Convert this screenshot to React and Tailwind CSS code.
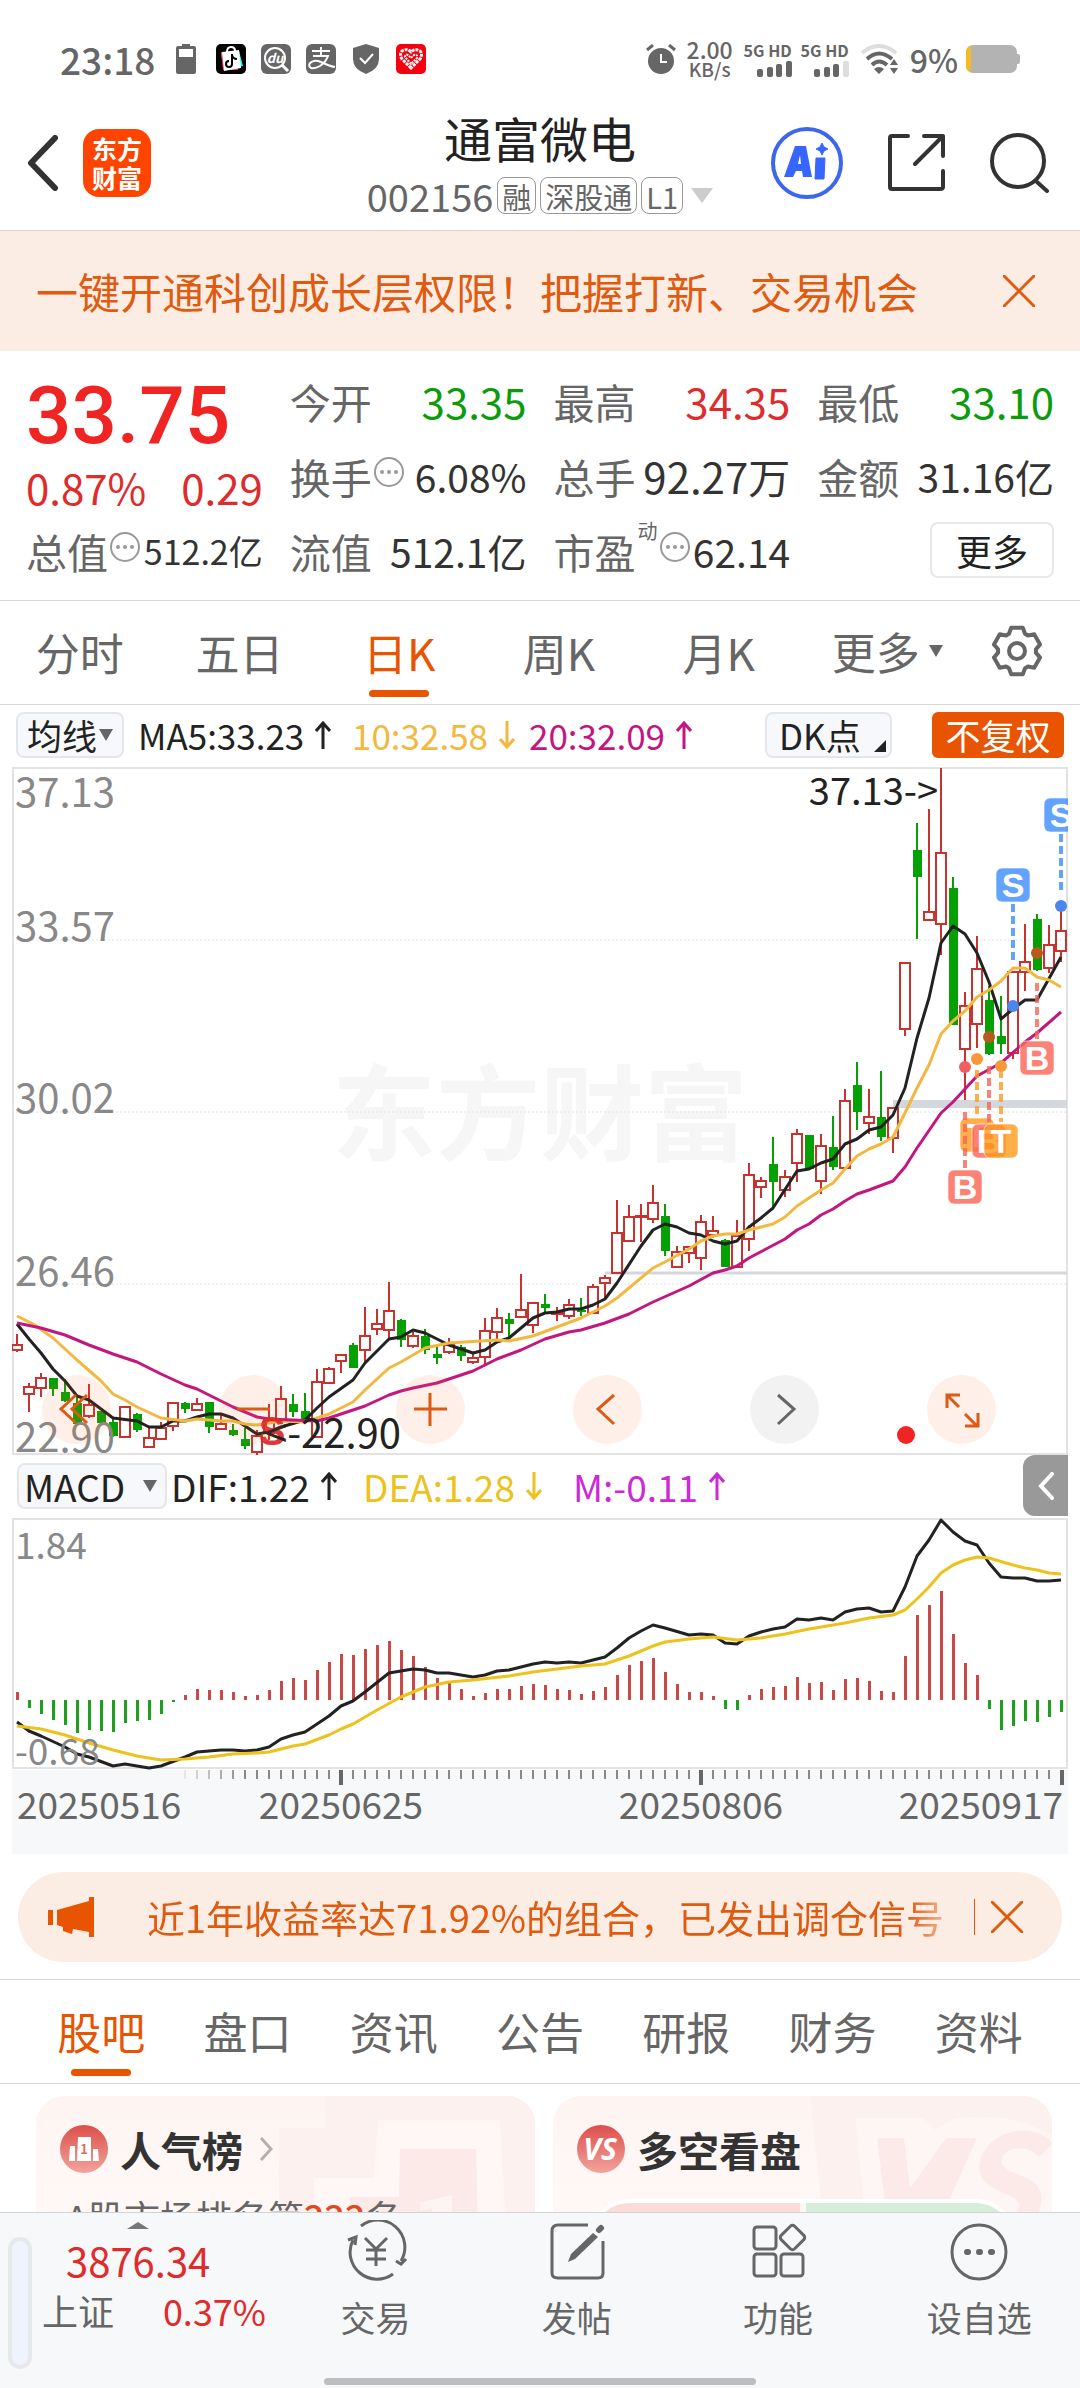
import { useState } from 'react'
import clsx from 'clsx'

// [up, high, bodyTop, bodyBottom, low] in chart units, one per trading day
const CANDLES = [
  [1, 1334, 1345, 1350, 1352], [1, 1383, 1387, 1394, 1412], [1, 1373, 1378, 1388, 1397], [0, 1378, 1378, 1389, 1396],
  [0, 1379, 1392, 1401, 1402], [0, 1397, 1403, 1424, 1424], [1, 1384, 1405, 1416, 1418], [0, 1411, 1411, 1423, 1424],
  [0, 1418, 1422, 1436, 1437], [1, 1407, 1407, 1437, 1437], [0, 1413, 1414, 1430, 1432], [1, 1428, 1438, 1447, 1448],
  [1, 1422, 1428, 1439, 1440], [1, 1403, 1403, 1426, 1431], [0, 1402, 1403, 1409, 1413], [1, 1398, 1404, 1410, 1411],
  [0, 1402, 1402, 1427, 1433], [1, 1415, 1424, 1429, 1430], [0, 1424, 1430, 1435, 1436], [0, 1428, 1439, 1446, 1449],
  [1, 1430, 1436, 1452, 1456], [1, 1404, 1420, 1433, 1440], [1, 1386, 1399, 1420, 1421], [0, 1394, 1404, 1412, 1417],
  [0, 1393, 1411, 1420, 1422], [1, 1369, 1382, 1437, 1438], [1, 1367, 1369, 1383, 1384], [1, 1355, 1355, 1361, 1373],
  [0, 1343, 1345, 1368, 1368], [1, 1307, 1336, 1350, 1363], [1, 1309, 1324, 1329, 1335], [1, 1282, 1311, 1330, 1338],
  [0, 1319, 1320, 1340, 1347], [1, 1332, 1336, 1346, 1348], [0, 1329, 1336, 1350, 1354], [0, 1346, 1354, 1358, 1364],
  [1, 1338, 1345, 1352, 1354], [0, 1345, 1347, 1356, 1361], [1, 1353, 1358, 1362, 1364], [1, 1318, 1331, 1357, 1366],
  [1, 1308, 1318, 1332, 1340], [0, 1313, 1319, 1324, 1337], [1, 1274, 1310, 1317, 1318], [1, 1303, 1303, 1325, 1333],
  [0, 1294, 1304, 1308, 1313], [1, 1307, 1313, 1314, 1321], [1, 1299, 1305, 1316, 1319], [0, 1298, 1310, 1312, 1316],
  [1, 1284, 1287, 1313, 1314], [1, 1275, 1278, 1283, 1298], [1, 1200, 1233, 1273, 1274], [1, 1205, 1217, 1241, 1242],
  [1, 1204, 1216, 1217, 1242], [1, 1185, 1203, 1219, 1223], [0, 1204, 1216, 1251, 1256], [1, 1246, 1252, 1267, 1267],
  [1, 1247, 1247, 1253, 1263], [1, 1215, 1222, 1258, 1270], [1, 1216, 1231, 1235, 1238], [0, 1239, 1240, 1267, 1267],
  [1, 1220, 1236, 1267, 1267], [1, 1163, 1175, 1239, 1251], [1, 1177, 1181, 1187, 1198], [0, 1137, 1164, 1182, 1207],
  [1, 1170, 1177, 1190, 1197], [1, 1129, 1134, 1163, 1182], [0, 1135, 1135, 1169, 1170], [1, 1134, 1146, 1181, 1194],
  [0, 1116, 1147, 1167, 1170], [1, 1089, 1101, 1168, 1168], [0, 1062, 1085, 1112, 1130], [1, 1089, 1117, 1123, 1134],
  [0, 1071, 1117, 1137, 1141], [1, 1108, 1108, 1138, 1153], [1, 963, 963, 1029, 1036], [0, 823, 850, 877, 939],
  [1, 809, 912, 920, 921], [1, 768, 853, 924, 955], [0, 877, 888, 1025, 1025], [1, 992, 1006, 1049, 1100],
  [1, 936, 969, 1024, 1048], [0, 986, 1000, 1054, 1055], [0, 996, 1036, 1044, 1054], [1, 972, 972, 1053, 1059],
  [1, 924, 962, 972, 991], [0, 914, 919, 970, 971], [1, 925, 945, 968, 973], [1, 903, 931, 951, 962],
]

const MA5 = '17,1324 29,1339 41,1353 53,1369 65,1381 77,1396 89,1400 113,1418 137,1421 149,1427 161,1427 173,1421 185,1421 197,1417 209,1414 221,1414 233,1418 257,1434 269,1432 281,1427 305,1420 317,1408 329,1397 353,1380 365,1363 389,1339 401,1337 413,1330 425,1333 449,1345 473,1353 485,1350 497,1342 509,1338 533,1318 545,1313 557,1312 569,1309 581,1309 593,1305 605,1299 617,1283 641,1246 653,1230 665,1224 677,1227 689,1233 701,1235 713,1241 725,1244 737,1241 749,1227 761,1218 773,1208 797,1171 809,1169 821,1163 833,1159 845,1144 857,1139 869,1130 881,1127 893,1115 905,1088 917,1038 929,998 941,943 953,926 965,934 977,953 989,982 1001,1019 1013,1009 1025,1000 1037,1000 1061,957'
const MA10 = '17,1316 35,1325 53,1338 77,1360 101,1381 113,1394 125,1400 137,1407 161,1418 185,1421 197,1419 221,1421 233,1421 245,1424 257,1425 269,1423 281,1421 305,1422 317,1418 329,1414 353,1402 365,1390 389,1368 401,1362 425,1348 449,1343 497,1340 509,1341 533,1336 557,1327 581,1318 605,1306 617,1298 653,1268 665,1262 689,1249 701,1241 713,1236 725,1234 737,1234 749,1230 761,1227 773,1224 785,1217 797,1206 821,1190 833,1183 845,1169 857,1156 869,1149 881,1144 893,1137 905,1113 917,1088 929,1065 941,1034 953,1021 965,1011 977,997 989,990 1001,981 1013,968 1025,968 1037,977 1049,980 1061,987'
const MA20 = '17,1323 41,1328 65,1335 89,1345 113,1354 137,1362 161,1374 185,1385 197,1389 221,1401 233,1407 257,1417 269,1419 317,1421 329,1418 365,1406 389,1395 401,1391 413,1388 437,1383 473,1371 497,1359 521,1350 545,1339 569,1332 581,1330 605,1323 629,1314 653,1302 689,1286 713,1273 725,1270 737,1266 749,1258 785,1239 797,1230 809,1224 821,1215 833,1209 845,1201 857,1194 869,1190 893,1181 905,1167 917,1148 941,1113 953,1102 977,1076 1001,1063 1025,1042 1037,1033 1061,1012'

const MACD = [
  8, -8, -14, -20, -25, -33, -30, -31, -32, -23, -21, -20, -14, -2, 5, 11, 10, 10, 8, 4, 5, 10, 19, 22, 20, 30, 38, 46, 45, 51,
  55, 59, 50, 44, 33, 22, 17, 11, 4, 7, 11, 11, 14, 16, 15, 11, 10, 6, 9, 13, 25, 35, 39, 42, 28, 16, 8, 8, 4, -9,
  -10, 5, 11, 13, 14, 23, 17, 18, 10, 21, 22, 19, 9, 8, 44, 85, 95, 109, 66, 37, 25, -9, -30, -26, -21, -22, -17, -12,
]
// [day, y]
const DIF = [
  [0, 222], [1, 231], [2, 236], [4, 247], [5, 254], [6, 257], [8, 266], [9, 264], [11, 268], [12, 266], [14, 257], [15, 252],
  [17, 250], [18, 250], [19, 251], [20, 250], [21, 247], [22, 239], [23, 235], [24, 232], [26, 216], [27, 206], [28, 201],
  [29, 192], [31, 173], [33, 169], [34, 170], [35, 173], [36, 173], [38, 177], [39, 175], [40, 171], [41, 170], [43, 164],
  [44, 162], [45, 163], [46, 162], [47, 163], [49, 157], [50, 148], [51, 138], [52, 131], [53, 125], [54, 128], [56, 135],
  [57, 134], [58, 135], [59, 143], [60, 144], [61, 136], [62, 132], [63, 129], [64, 127], [65, 119], [66, 120], [67, 118],
  [68, 120], [69, 112], [70, 109], [71, 108], [72, 112], [73, 111], [74, 87], [75, 56], [76, 40], [77, 20], [78, 32],
  [79, 41], [80, 45], [81, 63], [82, 77], [83, 78], [84, 78], [85, 81], [86, 81], [87, 80],
]
const DEA = [
  [0, 226], [2, 229], [4, 235], [6, 243], [8, 250], [10, 256], [12, 260], [14, 259], [16, 257], [18, 254], [20, 253], [21, 252],
  [23, 246], [24, 244], [26, 235], [27, 229], [28, 224], [30, 210], [32, 197], [34, 187], [36, 182], [38, 180], [41, 176],
  [43, 172], [45, 169], [47, 166], [49, 164], [51, 156], [53, 146], [54, 142], [56, 139], [58, 137], [60, 140], [62, 138],
  [64, 134], [66, 129], [69, 123], [71, 118], [73, 115], [74, 110], [75, 99], [76, 87], [77, 73], [78, 65], [79, 60], [80, 57],
  [81, 58], [83, 65], [84, 68], [85, 70], [86, 73], [87, 74],
]

const dayX = (i) => 17 + i * 12
const toPoints = (rows) => rows.map(([i, y]) => `${dayX(i)},${y}`).join(' ')

// Trade markers: badge centre, dashed stem, dot
const MARKERS = [
  { t: 'T', x: 977, y: 1135, from: 1070, to: 1116, dot: 1059, color: '#ff9a1f', dotColor: '#f7993a' },
  { t: 'B', x: 989, y: 1141, from: 1066, to: 1122, dot: 1037, color: '#fb6352', dotColor: '#b85a20' },
  { t: 'T', x: 1001, y: 1141, from: 1070, to: 1122, dot: 1066, color: '#ff9a1f', dotColor: '#f7993a' },
  { t: 'B', x: 965, y: 1187, from: 1112, to: 1168, dot: 1067, color: '#fb6352', dotColor: '#f06060' },
  { t: 'B', x: 1037, y: 1058, from: 983, to: 1039, dot: 953, color: '#fb6352', dotColor: '#b85a20' },
  { t: 'S', x: 1013, y: 885, from: 904, to: 960, dot: 1006, color: '#3b8cff', dotColor: '#4a86ec' },
  { t: 'S', x: 1061, y: 815, from: 834, to: 890, dot: 906, color: '#3b8cff', dotColor: '#4a86ec' },
]

function Triangle({ className }) {
  return (
    <svg viewBox="0 0 14 12" preserveAspectRatio="none" className={className} fill="currentColor" aria-hidden="true">
      <path d="M0 0h14L7 12z" />
    </svg>
  )
}

function Arrow({ down }) {
  return (
    <svg viewBox="0 0 16 28" className="w-4 h-7 ml-[11px]" fill="none" stroke="currentColor" strokeWidth="3" aria-hidden="true">
      <path d={down ? 'M8 0v26M1 18l7 8 7-8' : 'M8 28V2M1 10l7-8 7 8'} />
    </svg>
  )
}

function Close() {
  return (
    <svg viewBox="0 0 32 32" className="w-8 h-8" fill="none" stroke="#e05a10" strokeWidth="3" strokeLinecap="round">
      <path d="M1 1l30 30M31 1L1 31" />
    </svg>
  )
}

function More() {
  return (
    <svg viewBox="0 0 30 30" className="w-[30px] h-[30px] mb-2 ml-[2px]" aria-hidden="true">
      <circle cx="15" cy="15" r="14" fill="none" stroke="#999" strokeWidth="2" />
      <circle cx="8" cy="15" r="2" fill="#999" />
      <circle cx="15" cy="15" r="2" fill="#999" />
      <circle cx="22" cy="15" r="2" fill="#999" />
    </svg>
  )
}

function Signal({ weak }) {
  return (
    <div className="flex flex-col items-end gap-[3px] w-12">
      <span className="text-[16px] leading-[16px] font-bold whitespace-nowrap">5G HD</span>
      <svg viewBox="0 0 35 16" className="w-[35px] h-4" fill="#666">
        <rect x="0" y="8" width="6" height="8" rx="2" />
        <rect x="10" y="6" width="6" height="10" rx="2" />
        <rect x="19" y="3" width="6" height="13" rx="2" />
        <rect x="29" y="0" width="6" height="16" rx="2" fill={weak ? '#ddd' : '#666'} />
      </svg>
    </div>
  )
}

function StatusBar() {
  return (
    <div className="flex items-center h-[100px] pt-[18px] pl-[60px] pr-[60px] text-[#666]">
      <span className="w-[94px] text-[37px] leading-[40px] font-medium">23:18</span>
      <svg viewBox="0 0 20 30" className="w-5 h-[30px] ml-[22px]">
        <path d="M6 0h8v2h4q2 0 2 2v24q0 2-2 2H2q-2 0-2-2V4q0-2 2-2h4z" fill="#666" />
        <rect x="3" y="5" width="14" height="8" fill="#fff" />
      </svg>
      <svg viewBox="0 0 30 30" className="w-[30px] h-[30px] ml-5">
        <rect width="30" height="30" rx="5" fill="#000" />
        <path d="M11 8q0-5 4-5t4 4" fill="none" stroke="#fff" strokeWidth="2" />
        <path d="M5 9l18-2 4 15-19 4z" fill="#25f4ee" />
        <path d="M5 8h16l1 18H7z" fill="#fe2c55" />
        <path d="M6 8l17-2 2 18-17 3z" fill="#fff" />
        <path d="M16 10v10a3 3 0 1 1-3-3M16 11q1 4 5 4" fill="none" stroke="#000" strokeWidth="2" />
      </svg>
      <svg viewBox="0 0 30 30" className="w-[30px] h-[30px] ml-[15px]">
        <rect width="30" height="30" rx="6" fill="#666" />
        <circle cx="14" cy="14" r="10" fill="none" stroke="#fff" strokeWidth="2" />
        <path d="M21 21l6 6" stroke="#fff" strokeWidth="3" />
        <text x="14" y="19" fontSize="13" fontWeight="700" fontStyle="italic" textAnchor="middle" fill="#fff">du</text>
      </svg>
      <svg viewBox="0 0 30 30" className="w-[30px] h-[30px] ml-[15px]">
        <rect width="30" height="30" rx="6" fill="#666" />
        <path d="M6 7h18M15 3v9M7 12h15q-2 6-8 10-5 3-9 2-3-2-1-5 4-4 11-1 8 4 14 5" fill="none" stroke="#fff" strokeWidth="2" />
      </svg>
      <svg viewBox="0 0 26 30" className="w-[26px] h-[30px] ml-[17px]">
        <path d="M13 0l13 4v11q0 10-13 15Q0 25 0 15V4z" fill="#666" />
        <path d="M7 14l5 5 8-9" fill="none" stroke="#fff" strokeWidth="2" />
      </svg>
      <svg viewBox="0 0 30 30" className="w-[30px] h-[30px] ml-[17px]">
        <rect width="30" height="30" rx="5" fill="#f5000f" />
        <path d="M15 24L6 15q-3-5 0-8 5-3 9 1 4-4 9-1 3 3 0 8z" fill="none" stroke="#fff" strokeWidth="3" strokeDasharray="3 1" />
        <path d="M15 20l-6-7q0-3 3-2l3 3 3-3q4-1 3 3z" fill="none" stroke="#fff" strokeWidth="2" strokeDasharray="2 1" />
      </svg>

      <div className="flex items-center ml-auto">
        <svg viewBox="0 0 30 30" className="w-[30px] h-[30px]">
          <circle cx="15" cy="17" r="13" fill="#666" />
          <path d="M1 6l6-5M29 6l-6-5" stroke="#666" strokeWidth="3" />
          <path d="M15 10v8h6" fill="none" stroke="#fff" strokeWidth="2" />
        </svg>
        <div className="flex flex-col items-center ml-[11px] font-medium">
          <span className="text-[23px] leading-[20px]">2.00</span>
          <span className="text-[19px] leading-[20px]">KB/s</span>
        </div>
        <div className="flex gap-[9px] ml-[11px]">
          <Signal />
          <Signal weak />
        </div>
        <svg viewBox="0 0 37 30" className="w-[37px] h-[30px] ml-3" fill="none" strokeWidth="4">
          <path d="M1 9Q18-5 35 9" stroke="#ddd" />
          <path d="M6 15Q18 4 31 15M11 21Q18 14 26 21" stroke="#666" />
          <path d="M13 25q5-4 10 0l-5 5zM29 21l4-6 4 6zM29 24h8l-4 6z" fill="#666" />
        </svg>
        <span className="text-[32px] leading-[32px] font-medium ml-3">9%</span>
        <svg viewBox="0 0 54 28" className="w-[54px] h-7 ml-2">
          <rect width="51" height="28" rx="7" fill="#b3b3b3" />
          <path d="M5 1v26Q0 25 0 21V7Q0 3 5 1z" fill="#f7b91e" />
          <rect x="49" y="9" width="5" height="10" rx="2" fill="#b3b3b3" />
        </svg>
      </div>
    </div>
  )
}

function Header() {
  const badge = 'flex items-center h-[37px] px-1 border border-[#999] rounded-lg text-[29px] leading-[30px]'
  return (
    <header className="relative flex items-center justify-between h-[131px] pl-[27px] pr-[30px] pb-[5px] border-b border-[#d8d8d2]">
      <div className="flex items-center gap-6">
        <button aria-label="返回">
          <svg viewBox="0 0 32 56" className="w-8 h-14" fill="none" stroke="#333" strokeWidth="6" strokeLinecap="round" strokeLinejoin="round">
            <path d="M28 3L4 28l24 25" />
          </svg>
        </button>
        <a href="#home" className="grid content-center justify-center w-[68px] h-[68px] rounded-2xl bg-[#ff4400] text-white font-bold text-[25px] leading-[29px]">
          <span>东方</span>
          <span>财富</span>
        </a>
      </div>

      <div className="absolute inset-x-0 top-[7px] flex flex-col items-center pointer-events-none">
        <h1 className="text-[48px] leading-[60px] text-[#222]">通富微电</h1>
        <div className="flex items-center gap-1 h-[57px] text-[#666]">
          <span className="text-[38px] leading-[40px]">002156</span>
          <span className={badge}>融</span>
          <span className={badge}>深股通</span>
          <span className={badge}>L1</span>
          <Triangle className="w-[22px] h-[15px] ml-1 text-[#ccc]" />
        </div>
      </div>

      <div className="flex items-center gap-11">
        <button aria-label="AI 助手">
          <svg viewBox="0 0 72 74" className="w-[72px] h-[74px]">
            <circle cx="36" cy="37" r="34" fill="none" stroke="#3b66ee" strokeWidth="4" />
            <path fillRule="evenodd" d="M24 20h11l6 31h-9l-1-6h-6l-3 6h-9zM27 38h3l-1-9z" fill="#3766ff" />
            <path d="M45 32h9l-1 21h-9zM51 17l2 4 4 2-4 2-2 4-2-4-4-2 4-2z" fill="#3766ff" stroke="#3766ff" strokeLinejoin="round" />
          </svg>
        </button>
        <button aria-label="分享">
          <svg viewBox="0 0 59 59" className="w-[59px] h-[59px]" fill="none" stroke="#333" strokeWidth="4" strokeLinecap="round" strokeLinejoin="round">
            <path d="M21 3H5q-2 0-2 2v49q0 2 2 2h48q3 0 3-2V38M37 3h19v20M56 3L28 31" />
          </svg>
        </button>
        <button aria-label="搜索">
          <svg viewBox="0 0 60 60" className="w-[60px] h-[60px]" fill="none" stroke="#333" strokeWidth="4" strokeLinecap="round">
            <circle cx="28" cy="28" r="26" />
            <path d="M47 49l10 9" />
          </svg>
        </button>
      </div>
    </header>
  )
}

function Stat({ label, value, color = 'text-[#333]', size = 'text-[42px]', note, sup }) {
  return (
    <div className="flex items-center h-[75px] whitespace-nowrap">
      <span className="text-[41px] leading-[48px] text-[#666]">{label}</span>
      {sup && <span className="self-start mt-2 ml-[2px] text-[20px] leading-[20px] text-[#666]">{sup}</span>}
      {note && <More />}
      <span className={clsx('ml-auto leading-[48px]', size, color)}>{value}</span>
    </div>
  )
}

function Quote() {
  return (
    <section className="grid grid-cols-4 gap-x-[27px] px-[26px] pt-3 pb-3 border-b border-[#d8d8d8]">
      <div>
        <div className="h-[98px] text-[80px] leading-[106px] font-medium font-['Roboto','Noto_Sans_CJK_SC',sans-serif] text-[#f12424]">33.75</div>
        <div className="flex justify-between h-[52px] text-[42px] leading-[52px] text-[#df2b2b]">
          <span>0.87%</span>
          <span>0.29</span>
        </div>
        <Stat label="总值" value="512.2亿" size="text-[34px]" note />
      </div>
      <div>
        <Stat label="今开" value="33.35" color="text-[#0a9c0a]" />
        <Stat label="换手" value="6.08%" size="text-[39px]" note />
        <Stat label="流值" value="512.1亿" size="text-[39px]" />
      </div>
      <div>
        <Stat label="最高" value="34.35" color="text-[#df2b2b]" />
        <Stat label="总手" value="92.27万" />
        <Stat label="市盈" value="62.14" size="text-[39px]" sup="动" note />
      </div>
      <div>
        <Stat label="最低" value="33.10" color="text-[#0a9c0a]" />
        <Stat label="金额" value="31.16亿" size="text-[39px]" />
        <div className="flex justify-end items-center h-[74px]">
          <button className="w-[124px] h-14 border-2 border-[#e8e8ea] rounded-lg text-[36px] leading-[40px] text-[#222]">更多</button>
        </div>
      </div>
    </section>
  )
}

// Six-tooth outline
const GEAR = Array.from({ length: 6 }, (_, k) =>
  [[-25, 19], [-14, 24], [14, 24], [25, 19]].map(([off, r]) => {
    const a = ((k * 60 - 90 + off) * Math.PI) / 180
    return `${(26 + r * Math.cos(a)).toFixed(2)},${(26 + r * Math.sin(a)).toFixed(2)}`
  }).join(' ')
).join(' ')

function PeriodTabs() {
  const [active, setActive] = useState('日K')
  return (
    <nav className="grid grid-cols-[repeat(5,160fr)_178fr_82fr] h-[104px] pr-[22px] border-b border-[#d8d8d8] text-[44px] leading-[60px] text-[#666]">
      {['分时', '五日', '日K', '周K', '月K'].map((tab) => (
        <button key={tab} onClick={() => setActive(tab)} className={clsx('flex flex-col items-center pt-[21px]', tab === active && 'text-[#e85400]')}>
          {tab}
          {tab === active && <span className="w-[60px] h-[7px] mt-2 rounded-full bg-[#e85400]" />}
        </button>
      ))}
      <button className="flex items-center justify-center gap-[9px] pb-1">
        更多
        <Triangle className="w-[14px] h-3" />
      </button>
      <button aria-label="设置" className="flex items-center justify-center pb-1">
        <svg viewBox="0 0 52 52" className="w-[52px] h-[52px]" fill="none" stroke="#666" strokeWidth="4" strokeLinejoin="round">
          <polygon points={GEAR} />
          <circle cx="26" cy="26" r="8" />
        </svg>
      </button>
    </nav>
  )
}

const pill = 'flex items-center h-[46px] border-2 border-[#e4e6ea] rounded-lg bg-[#f6f8fb] text-[#222]'

function KChart() {
  return (
    <section className="px-3 text-[35px] leading-[40px]">
      <div className="flex items-center h-[62px] pl-1 pr-1 pb-[2px] whitespace-nowrap">
        <label className={clsx(pill, 'w-[108px] pl-[9px]')}>
          <span className="sr-only">主图指标</span>
          <select className="w-[72px] h-10 p-0 appearance-none bg-transparent text-[35px] leading-[40px] outline-none">
            <option>均线</option>
            <option>布林</option>
          </select>
          <Triangle className="w-[14px] h-3 text-[#666]" />
        </label>
        <span className="flex items-center w-[214px] ml-[14px] text-[#222]">MA5:33.23<Arrow /></span>
        <span className="flex items-center w-[177px] text-[#f2b840]">10:32.58<Arrow down /></span>
        <span className="flex items-center text-[#c4167f]">20:32.09<Arrow /></span>
        <button className={clsx(pill, 'relative w-[127px] ml-auto pl-3')}>
          DK点
          <svg viewBox="0 0 12 12" className="absolute right-1 bottom-1 w-3 h-3"><path d="M12 0v12H0z" fill="#222" /></svg>
        </button>
        <button className="w-[132px] h-[46px] ml-10 rounded-md bg-[#e85400] text-white">不复权</button>
      </div>

      <div className="relative">
        <svg viewBox="12 767 1056 688" className="block w-full" fill="none">
          <text x="540" y="1153" fontSize="104" fontWeight="700" textAnchor="middle" fill="#f6f6f6">东方财富</text>
          <rect x="13" y="768" width="1054" height="686" stroke="#e2e2e2" strokeWidth="2" />
          <path d="M12 940h1055M12 1112h1055M12 1284h1055" stroke="#e2e2e2" strokeDasharray="2 2" />
          <path d="M893 1104h174" stroke="#d4d7dc" strokeWidth="8" />
          <path d="M605 1273h462" stroke="#d4d7dc" strokeWidth="3" />
          {CANDLES.map(([up, high, top, bottom, low], i) => {
            const x = dayX(i)
            return up ? (
              <g key={i} stroke="#c8322f" strokeWidth="2">
                <path d={`M${x} ${high}V${top}M${x} ${bottom}V${low}`} />
                <rect x={x - 5} y={top} width="10" height={bottom - top} />
              </g>
            ) : (
              <g key={i} fill="#04a004">
                <rect x={x - 1} y={high} width="2" height={low - high} />
                <rect x={x - 4} y={top} width="9" height={bottom - top} />
              </g>
            )
          })}
          <g strokeWidth="3" strokeLinejoin="round">
            <polyline points={MA5} stroke="#222" />
            <polyline points={MA10} stroke="#f2b840" />
            <polyline points={MA20} stroke="#c4167f" />
          </g>
          <g fontSize="40" fill="#888">
            <text x="15" y="807">37.13</text>
            <text x="15" y="941">33.57</text>
            <text x="15" y="1113">30.02</text>
            <text x="15" y="1286">26.46</text>
            <text x="15" y="1452">22.90</text>
          </g>
          <text x="272" y="1445" fontSize="40" fontWeight="700" fontFamily="Liberation Sans" textAnchor="middle" fill="#d8232a" opacity="0.9">S</text>
          <text x="265" y="1448" fontSize="40" fill="#222">&lt;-22.90</text>
          <text x="938" y="805" fontSize="38" textAnchor="end" fill="#222">37.13-&gt;</text>
          {MARKERS.map(({ t, x, y, from, to, dot, color, dotColor }) => (
            <g key={`${x}-${y}`}>
              <path d={`M${x} ${from}V${to}`} stroke={color} strokeOpacity="0.8" strokeWidth="4" strokeDasharray="8 4" />
              <circle cx={x} cy={dot} r="6" fill={dotColor} />
              <rect x={x - 17} y={y - 17} width="34" height="34" rx="6" fill={color} fillOpacity="0.8" stroke="#fff" strokeOpacity="0.6" />
              <text x={x} y={y + 12} fontSize="34" fontWeight="700" fontFamily="Liberation Sans" textAnchor="middle" fill="#fff">{t}</text>
            </g>
          ))}
          <circle cx="906" cy="1435" r="9" fill="#f12424" />
        </svg>
        <ChartControls />
      </div>
    </section>
  )
}

const CONTROLS = [
  ['最早', 'M34 20L19 34l15 14M45 20L30 34l15 14'],
  ['缩小', 'M18 34h33'],
  ['放大', 'M18 34h33M34 18v33'],
  ['向左', 'M41 20L25 34l16 15'],
  ['向右', 'M28 20l16 14-16 15'],
  ['全屏', 'M33 20H20v13M20 20l12 12M38 39l12 12M51 38v13H38'],
]

function ChartControls() {
  return (
    <div className="absolute left-[30px] right-[72px] bottom-[11px] flex justify-between">
      {CONTROLS.map(([name, d]) => (
        <button
          key={name}
          aria-label={name}
          className={clsx('w-[69px] h-[69px] rounded-full', name === '向右' ? 'bg-black/5 text-[#666]' : 'bg-[#f96a2a]/10 text-[#dc5a14]')}
        >
          <svg viewBox="0 0 69 69" fill="none" stroke="currentColor" strokeWidth="3"><path d={d} /></svg>
        </button>
      ))}
    </div>
  )
}

function MacdChart() {
  return (
    <section className="px-3 text-[37px] leading-[40px]">
      <div className="flex items-center h-[63px] pl-[5px] pb-[2px] whitespace-nowrap">
        <label className={clsx(pill, 'w-[150px] pl-[5px]')}>
          <span className="sr-only">副图指标</span>
          <select className="w-[119px] h-10 p-0 appearance-none bg-transparent text-[37px] leading-[40px] outline-none">
            <option>MACD</option>
            <option>KDJ</option>
          </select>
          <Triangle className="w-[14px] h-3 text-[#666]" />
        </label>
        <span className="flex items-center w-[192px] ml-1 text-[#222]">DIF:1.22<Arrow /></span>
        <span className="flex items-center w-[210px] text-[#edc21c]">DEA:1.28<Arrow down /></span>
        <span className="flex items-center text-[#cc2ad4]">M:-0.11<Arrow /></span>
        <button aria-label="展开" className="flex items-center justify-center w-[45px] h-[61px] ml-auto rounded-l-xl bg-[#999]">
          <svg viewBox="0 0 16 28" className="w-4 h-7" fill="none" stroke="#fff" strokeWidth="4" strokeLinecap="round"><path d="M14 2L3 14l11 12" /></svg>
        </button>
      </div>
      <svg viewBox="12 18 1056 252" className="block w-full" fill="none">
        <rect x="13" y="19" width="1054" height="249" stroke="#e2e2e2" strokeWidth="2" />
        {MACD.map((v, i) => (
          <rect key={i} x={dayX(i) - 1} y={v > 0 ? 200 - v : 200} width="3" height={Math.abs(v)} fill={v > 0 ? '#c84a48' : '#1ea01e'} />
        ))}
        <polyline points={toPoints(DIF)} stroke="#222" strokeWidth="3" strokeLinejoin="round" />
        <polyline points={toPoints(DEA)} stroke="#edc21c" strokeWidth="3" strokeLinejoin="round" />
        <g fontSize="37" fill="#888">
          <text x="15" y="59">1.84</text>
          <text x="15" y="265">-0.68</text>
        </g>
      </svg>
      <svg viewBox="12 0 1056 84" className="block w-full bg-[#f7f8fa]" fill="#666" fontSize="37">
        {MACD.map((_, i) => i > 13 && (
          <rect key={i} x={dayX(i) - 1} y="0" width="2" height="9" fill="#888" opacity={i < 19 ? (i - 13) / 6 : 1} />
        ))}
        <path d="M339 0h4v15h-4zM699 0h4v15h-4zM1060 0h4v15h-4z" />
        <text x="17" y="49">20250516</text>
        <text x="341" y="49" textAnchor="middle">20250625</text>
        <text x="701" y="49" textAnchor="middle">20250806</text>
        <text x="1063" y="49" textAnchor="end">20250917</text>
      </svg>
    </section>
  )
}

function InfoTabs() {
  const [active, setActive] = useState('股吧')
  return (
    <nav className="grid grid-cols-7 h-[105px] px-7 border-y border-[#d8d8d8] text-[44px] leading-[60px] text-[#666]">
      {['股吧', '盘口', '资讯', '公告', '研报', '财务', '资料'].map((tab) => (
        <button key={tab} onClick={() => setActive(tab)} className={clsx('flex flex-col items-center pt-[21px]', tab === active && 'text-[#e85400]')}>
          {tab}
          {tab === active && <span className="w-[60px] h-[7px] mt-2 rounded-full bg-[#e85400]" />}
        </button>
      ))}
    </nav>
  )
}

function Cards() {
  const card = 'relative h-[240px] rounded-[28px] overflow-hidden bg-gradient-to-b from-[#fef5f3] to-[#fffbf8]'
  return (
    <section className="grid grid-cols-2 gap-[18px] pt-3 pl-9 pr-7">
      <article className={card}>
        <svg viewBox="0 0 499 240" className="absolute inset-0 w-full">
          <path d="M290 0h209v240H243V32h46z" fill="#fdf1ef" />
          <path d="M342 24h122l12 216H278V82h60z" fill="#fef7f5" />
          <path d="M364 53h76l4 187H314V101h49z" fill="#fbeae8" />
          <path d="M385 106l31-7v141h-20V112l-12 3z" fill="#fef5f3" />
        </svg>
        <div className="relative flex items-center pt-[23px] pl-6">
          <svg viewBox="0 0 48 48" className="w-12 h-12">
            <linearGradient id="rank" x2="0" y2="1"><stop stopColor="#dc4f4a" /><stop offset="1" stopColor="#f2a39c" /></linearGradient>
            <circle cx="24" cy="24" r="24" fill="url(#rank)" />
            <path d="M10 21h5v15h-6zM18 12h13v24H17zM33 24h5l1 12h-6z" fill="#fff" />
            <text x="24" y="29" fontSize="13" fontWeight="700" textAnchor="middle" fill="#e06a64">1</text>
          </svg>
          <h2 className="ml-3 text-[41px] leading-[60px] font-bold text-[#333]">人气榜</h2>
          <svg viewBox="0 0 14 24" className="w-[14px] h-6 ml-4" fill="none" stroke="#b5b0b0" strokeWidth="3"><path d="M2 1l10 11L2 23" /></svg>
        </div>
        <p className="relative mt-[7px] ml-[30px] text-[36px] leading-[60px] text-[#666]">A股市场排名第<span className="font-medium text-[#e0481e]">222</span>名</p>
      </article>
      <article className={card}>
        <svg viewBox="0 0 499 240" className="absolute inset-0 w-full">
          <path d="M257 0h242v240H282z" fill="#fdf1ef" />
          <path d="M302 22h68l12 12 20-12q60-6 97 18v200H325z" fill="#fef6f4" />
          <path d="M324 42h27l6 50 36-50h31l-36 80h-54z" fill="#fbeae8" />
          <text x="442" y="140" fontSize="140" fontWeight="700" fontStyle="italic" textAnchor="middle" fill="#fbeae8">S</text>
        </svg>
        <div className="relative flex items-center pt-[23px] pl-6">
          <svg viewBox="0 0 48 48" className="w-12 h-12">
            <circle cx="24" cy="24" r="24" fill="url(#rank)" />
            <text x="23" y="35" fontSize="30" fontWeight="700" fontStyle="italic" fontFamily="Open Sans" textAnchor="middle" fill="#fff">VS</text>
          </svg>
          <h2 className="ml-3 text-[41px] leading-[60px] font-bold text-[#333]">多空看盘</h2>
        </div>
        <div className="relative flex gap-[6px] mt-5 mx-9 h-[60px] rounded-t-[40px] overflow-hidden border-4 border-white">
          <div className="flex-1 bg-[#fcdcd8]" />
          <div className="flex-1 bg-[#d6edda]" />
        </div>
      </article>
    </section>
  )
}

const NAV = [
  ['交易', <path key="t" d="M17 6a27 27 0 0 1 40 35m-5 0l5 3 5-5M49 54A27 27 0 0 1 9 20m-5 0l8-3-1 8M21 18l11 11 11-11M22 30h20M22 39h20M32 29v17" />],
  ['发帖', <g key="p"><path d="M43 5H13q-6 0-6 6v42q0 5 6 5h40q5 0 5-5V21" /><path d="M23 42l3-8 22-21 5 4-23 22z" fill="#666" stroke="none" /><path d="M54 10l2-2" strokeWidth="6" strokeLinecap="round" /></g>],
  ['功能', <g key="f"><rect x="8" y="7" width="22" height="22" rx="3" /><rect x="8" y="34" width="22" height="22" rx="3" /><rect x="35" y="34" width="22" height="22" rx="3" /><rect x="37" y="8" width="19" height="19" rx="3" transform="rotate(45 46.500 17.500)" /></g>],
  ['设自选', <g key="s"><circle cx="32" cy="32" r="27" /><path d="M20 32h1M32 32h1M44 32h1" strokeWidth="6" strokeLinecap="round" /></g>],
]

function BottomBar() {
  return (
    <footer className="relative shrink-0 flex h-[176px] border-t border-[#d2d3d6] bg-[#f6f8fa]">
      <div className="absolute left-2 top-6 w-6 h-[132px] rounded-full bg-[#eff3fc] border-4 border-[#e6e8ea]" />
      <a href="#index" className="w-[275px] shrink-0 pl-[42px] text-[#df2b2b]">
        <Triangle className="w-[22px] h-[7px] mt-[9px] ml-[85px] rotate-180 text-[#777]" />
        <div className="mt-[7px] ml-6 text-[40px] leading-[48px]">3876.34</div>
        <div className="flex justify-between mt-1 pr-[9px] text-[36px] leading-[44px]">
          <span className="text-[#666]">上证</span>
          <span>0.37%</span>
        </div>
      </a>
      <nav className="flex-1 grid grid-cols-4">
        {NAV.map(([name, icon]) => (
          <button key={name} className="flex flex-col items-center pt-[7px] text-[35px] leading-[44px] text-[#666]">
            <svg viewBox="0 0 64 64" className="w-16 h-16 mb-[11px]" fill="none" stroke="#666" strokeWidth="3">{icon}</svg>
            {name}
          </button>
        ))}
      </nav>
      <div className="absolute inset-x-0 bottom-[3px] mx-auto w-2/5 h-[7px] rounded-full bg-[#bdbec1]" />
    </footer>
  )
}

export default function App() {
  const [showBanner, setShowBanner] = useState(true)
  const [showNotice, setShowNotice] = useState(true)

  return (
    <div className="flex flex-col h-screen overflow-hidden bg-white font-['Noto_Sans_CJK_SC',sans-serif]">
      <StatusBar />
      <Header />
      <main className="flex-1 min-h-0 overflow-hidden">
        {showBanner && (
          <div className="flex items-center justify-between h-[120px] pl-[36px] pr-[45px] bg-[#fcede4] text-[42px] leading-[60px] text-[#e05a10]">
            <span>一键开通科创成长层权限！把握打新、交易机会</span>
            <button aria-label="关闭" onClick={() => setShowBanner(false)}><Close /></button>
          </div>
        )}
        <Quote />
        <PeriodTabs />
        <KChart />
        <MacdChart />
        {showNotice && (
          <div className="flex items-center h-[90px] mt-[18px] mb-[17px] mx-[18px] pl-[30px] pr-[39px] rounded-full bg-[#fcede4] text-[38px] leading-[60px] text-[#e05a10]">
            <svg viewBox="0 0 46 40" className="w-[46px] h-10 shrink-0" fill="#e85400">
              <path d="M0 13h5v15H0zM9 13l32-9V0h5v40h-5v-5l-16-3-1 5-9-3v-4l-6-2z" />
            </svg>
            <p className="flex-1 min-w-0 ml-[53px] overflow-hidden whitespace-nowrap [mask-image:linear-gradient(to_right,black_92%,transparent_99%)]">
              近1年收益率达71.92%的组合，已发出调仓信号
            </p>
            <span className="w-px h-9 mr-4 bg-[#e05a10]" />
            <button aria-label="关闭" onClick={() => setShowNotice(false)}><Close /></button>
          </div>
        )}
        <InfoTabs />
        <Cards />
      </main>
      <BottomBar />
    </div>
  )
}
